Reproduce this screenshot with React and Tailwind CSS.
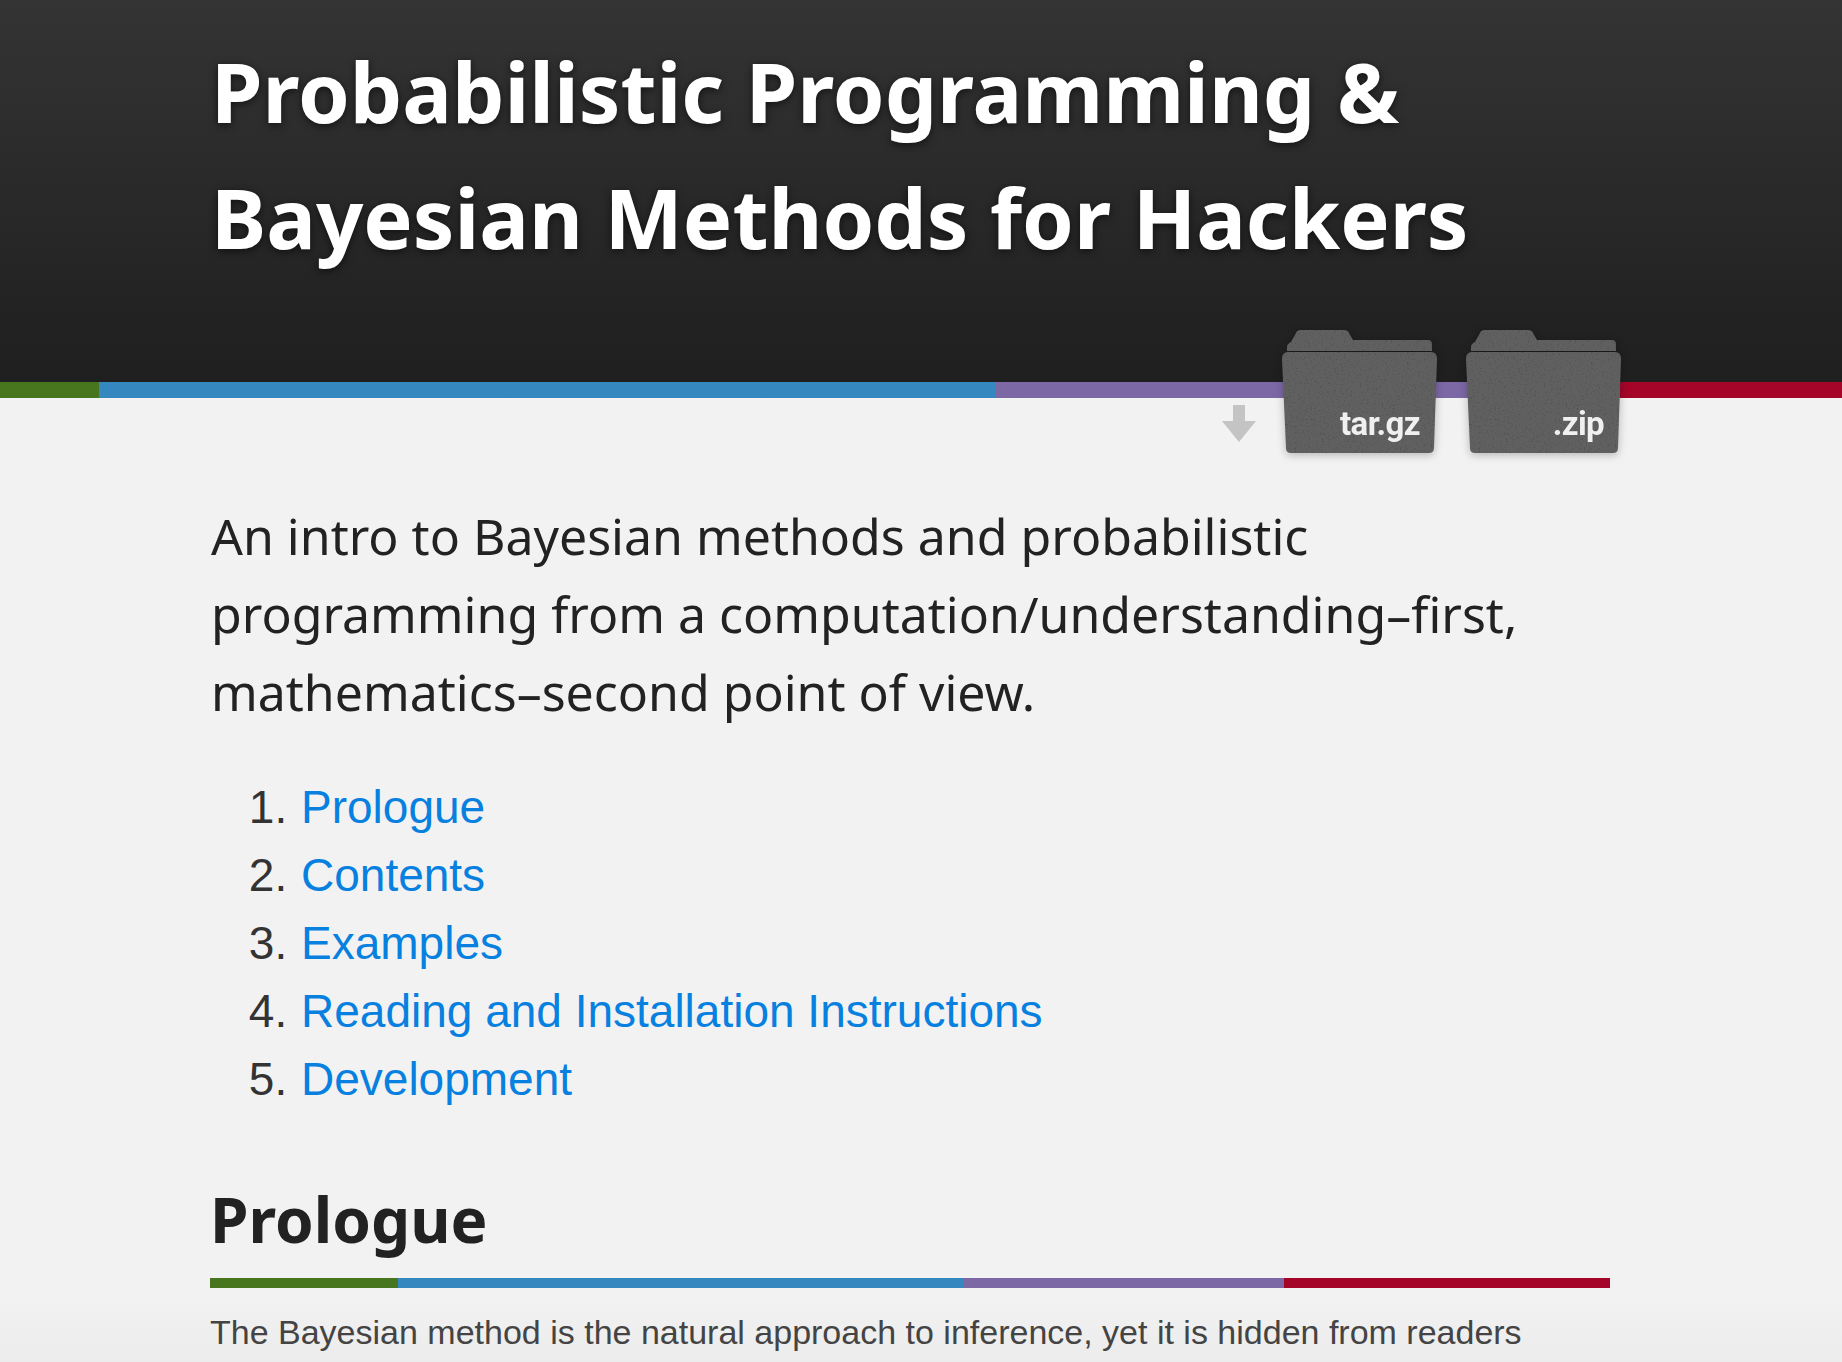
import React from "react";

const titleFont = "font-['Noto_Sans','Open_Sans',sans-serif]";

const links = ["Prologue", "Contents", "Examples", "Reading and Installation Instructions", "Development"];

const FolderIcon = ({ label, textClass }) => (
  <a className="relative block w-[156px] h-[124px] drop-shadow-[0_2px_4px_rgba(0,0,0,0.25)]">
    <svg width="156" height="124" viewBox="0 0 156 124" className="block">
      <defs>
        <filter id="grain" x="0" y="0" width="100%" height="100%">
          <feTurbulence type="fractalNoise" baseFrequency="0.55" numOctaves="2" seed="4" />
          <feColorMatrix values="0 0 0 0 0 0 0 0 0 0 0 0 0 0 0 0 0 0 1.1 -0.62" />
          <feComposite in2="SourceGraphic" operator="in" />
          <feMerge>
            <feMergeNode in="SourceGraphic" />
            <feMergeNode />
          </feMerge>
        </filter>
      </defs>
      <path
        d="M5 21 L5 17 Q5 14 9 12 L14 3 Q15 0 19 0 L62 0 Q66 0 67 3 L71 10 L146 10 Q150 10 150 15 L150 21 Z"
        fill="#606060"
        filter="url(#grain)"
      />
      <path
        d="M6 22 L149 22 Q155 22 155 29 L152 118 Q152 123 147 123 L9 123 Q4 123 4 118 L0 29 Q0 22 6 22 Z"
        fill="#616161"
        filter="url(#grain)"
      />
    </svg>
    <span className={`absolute top-[74px] font-['Roboto',sans-serif] font-bold text-[33px] leading-[40px] tracking-[-0.6px] text-[#f0f0f0] ${textClass}`}>
      {label}
    </span>
  </a>
);

const ColorBar = ({ className, widths }) => (
  <div className={`flex ${className}`}>
    <div className={`bg-[#48761f] ${widths[0]}`}></div>
    <div className={`bg-[#3588bf] ${widths[1]}`}></div>
    <div className={`bg-[#7d68a6] ${widths[2]}`}></div>
    <div className={`bg-[#a50529] flex-1`}></div>
  </div>
);

export default function App() {
  return (
    <div className="h-[1362px] overflow-hidden bg-gradient-to-b from-[#f2f2f2] via-[#f2f2f2] via-[95%] to-[#ececec] font-['Liberation_Sans',Arial,sans-serif]">
      <header className="relative">
        <div className="h-[382px] pl-[211px] pt-[28px] bg-gradient-to-b from-[#343434] to-[#1f1f1f]">
          <h1 className={`${titleFont} font-bold text-[83px] leading-[126px] text-white [text-shadow:0_2px_8px_rgba(0,0,0,0.6)]`}>
            Probabilistic Programming &amp;
            <br />
            Bayesian Methods for Hackers
          </h1>
        </div>
        <ColorBar className="h-[16px]" widths={["w-[99px]", "w-[897px]", "w-[624px]"]} />
        <div className="absolute top-[330px] left-[1222px] flex">
          <svg width="34" height="37" viewBox="0 0 34 37" className="mt-[75px] mr-[26px]">
            <path d="M11 0 H23 V16 H34 L17 37 L0 16 H11 Z" fill="#c4c4c4" />
          </svg>
          <div className="flex gap-[28px]">
            <FolderIcon label="tar.gz" textClass="right-[18px]" />
            <FolderIcon label=".zip" textClass="right-[18px]" />
          </div>
        </div>
      </header>

      <main className="w-[1400px] ml-[210px]">
        <p className={`${titleFont} mt-[99px] ml-[1px] text-[50px] leading-[78px] text-[#222222]`}>
          An intro to Bayesian methods and probabilistic
          <br />
          programming from a computation/understanding–first,
          <br />
          mathematics–second point of view.
        </p>

        <ol className="mt-[42px] list-decimal pl-[90px] text-[46px] leading-[68px] text-[#333333]">
          {links.map((link) => (
            <li key={link} className="pl-[1px]">
              <a className="text-[#0780e0]">{link}</a>
            </li>
          ))}
        </ol>

        <h2 className={`${titleFont} mt-[64px] font-bold text-[62px] leading-[84px] text-[#222222]`}>Prologue</h2>
        <ColorBar className="mt-[17px] h-[10px]" widths={["w-[188px]", "w-[566px]", "w-[320px]"]} />
        <p className="mt-[20px] text-[34px] leading-[48px] text-[#444444] whitespace-nowrap">
          The Bayesian method is the natural approach to inference, yet it is hidden from readers
        </p>
      </main>
    </div>
  );
}
